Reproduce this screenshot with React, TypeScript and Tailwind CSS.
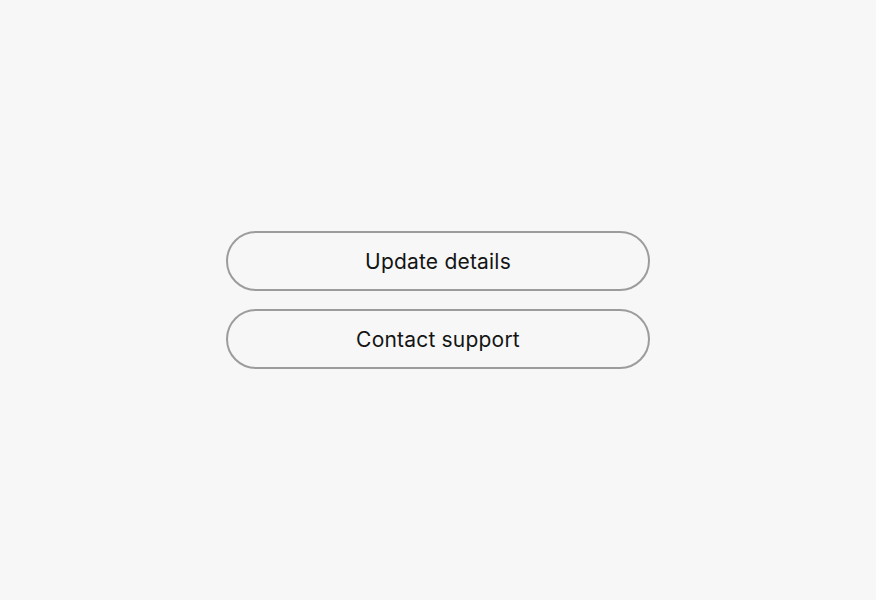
import React from 'react';

const actions = ['Update details', 'Contact support'];

const App: React.FC = () => {
  return (
    <div
      className="min-h-screen w-full bg-[#f7f7f7] flex items-center justify-center"
      style={{ fontFamily: 'Inter, "Noto Sans", sans-serif' }}
    >
      <div className="flex flex-col gap-[18px] w-[424px]">
        {actions.map((label) => (
          <button
            key={label}
            type="button"
            className="h-[60px] w-full rounded-full border-2 border-[#9c9c9c] bg-transparent pt-[2px] text-[21px] tracking-[0.2px] text-[#141414] flex items-center justify-center"
          >
            {label}
          </button>
        ))}
      </div>
    </div>
  );
};

export default App;
